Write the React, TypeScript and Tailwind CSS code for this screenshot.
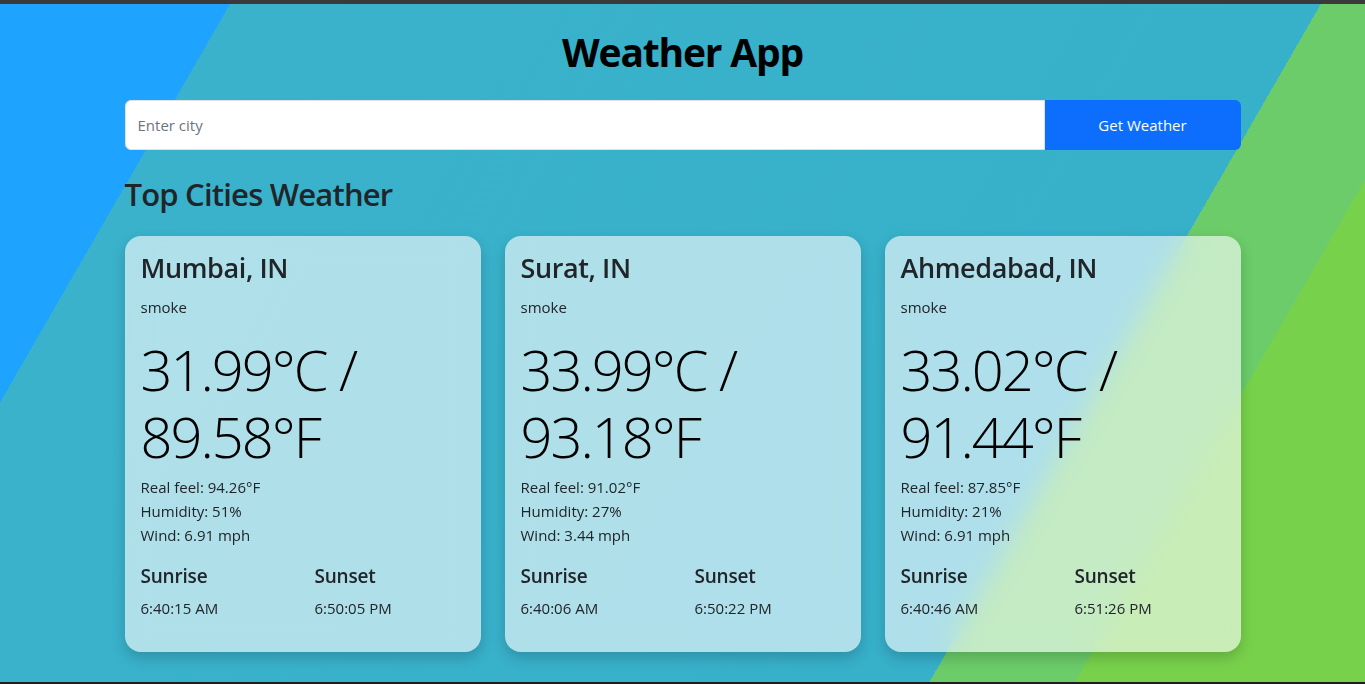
const cities = [
  {
    name: "Mumbai, IN",
    desc: "smoke",
    c: "31.99",
    f: "89.58",
    feel: "94.26",
    humidity: "51",
    wind: "6.91",
    sunrise: "6:40:15 AM",
    sunset: "6:50:05 PM",
  },
  {
    name: "Surat, IN",
    desc: "smoke",
    c: "33.99",
    f: "93.18",
    feel: "91.02",
    humidity: "27",
    wind: "3.44",
    sunrise: "6:40:06 AM",
    sunset: "6:50:22 PM",
  },
  {
    name: "Ahmedabad, IN",
    desc: "smoke",
    c: "33.02",
    f: "91.44",
    feel: "87.85",
    humidity: "21",
    wind: "6.91",
    sunrise: "6:40:46 AM",
    sunset: "6:51:26 PM",
  },
];

type City = (typeof cities)[number];

const WeatherCard = ({ city }: { city: City }) => {
  return (
    <div className="rounded-2xl bg-white/60 px-4 pt-4 pb-8 text-[#212529] shadow-[0_6px_14px_rgba(0,0,0,0.18)] backdrop-blur-md">
      <h3 className="text-[27px] font-semibold leading-[1.2] tracking-[-0.4px]">{city.name}</h3>
      <p className="mt-[10px] text-[15px] leading-6">{city.desc}</p>
      <p className="mt-[17px] text-[56px] font-light leading-[1.2] tracking-[-2px] text-black">
        {city.c}°C / {city.f}°F
      </p>
      <div className="mt-[5px] text-[15px] leading-6">
        <p>Real feel: {city.feel}°F</p>
        <p>Humidity: {city.humidity}%</p>
        <p>Wind: {city.wind} mph</p>
      </div>
      <div className="mt-[17px] grid grid-cols-2 gap-6">
        <div>
          <h5 className="text-[19px] font-semibold leading-6 tracking-[-0.2px]">Sunrise</h5>
          <p className="mt-2 text-[15px] leading-6">{city.sunrise}</p>
        </div>
        <div>
          <h5 className="text-[19px] font-semibold leading-6 tracking-[-0.2px]">Sunset</h5>
          <p className="mt-2 text-[15px] leading-6">{city.sunset}</p>
        </div>
      </div>
    </div>
  );
};

const App = () => {
  return (
    <div className="min-h-screen border-t-4 border-b-2 border-t-[#3a3a3a] border-b-[#1e1e1e] bg-[linear-gradient(120deg,#1ea3ff_13.1%,#3ab2cb_13.1%,#37b0ca_75.2%,#6bcc69_75.2%,#6bcc69_83.5%,#78d14b_83.5%)] font-['Open_Sans','Noto_Sans',sans-serif]">
      <div className="mx-auto w-[1140px] px-3">
        <h1 className="pt-6 text-center text-[39px] font-bold leading-[48px] tracking-[-1.2px] text-black">
          Weather App
        </h1>
        <form className="mt-6 flex h-[50px]" onSubmit={(e) => e.preventDefault()}>
          <input
            type="text"
            placeholder="Enter city"
            className="min-w-0 flex-1 rounded-l-md border border-[#dee2e6] bg-white px-3 text-[15px] text-[#212529] outline-none placeholder:text-[#6c757d]"
          />
          <button
            type="submit"
            className="w-[196px] rounded-r-md bg-[#0d6efd] text-[15px] text-white"
          >
            Get Weather
          </button>
        </form>
        <h2 className="mt-[26px] text-[31px] font-semibold leading-[1.2] tracking-[-0.8px] text-[#212529]">
          Top Cities Weather
        </h2>
        <div className="mt-[23px] grid grid-cols-3 gap-6">
          {cities.map((city) => (
            <WeatherCard key={city.name} city={city} />
          ))}
        </div>
      </div>
    </div>
  );
};

export default App;
